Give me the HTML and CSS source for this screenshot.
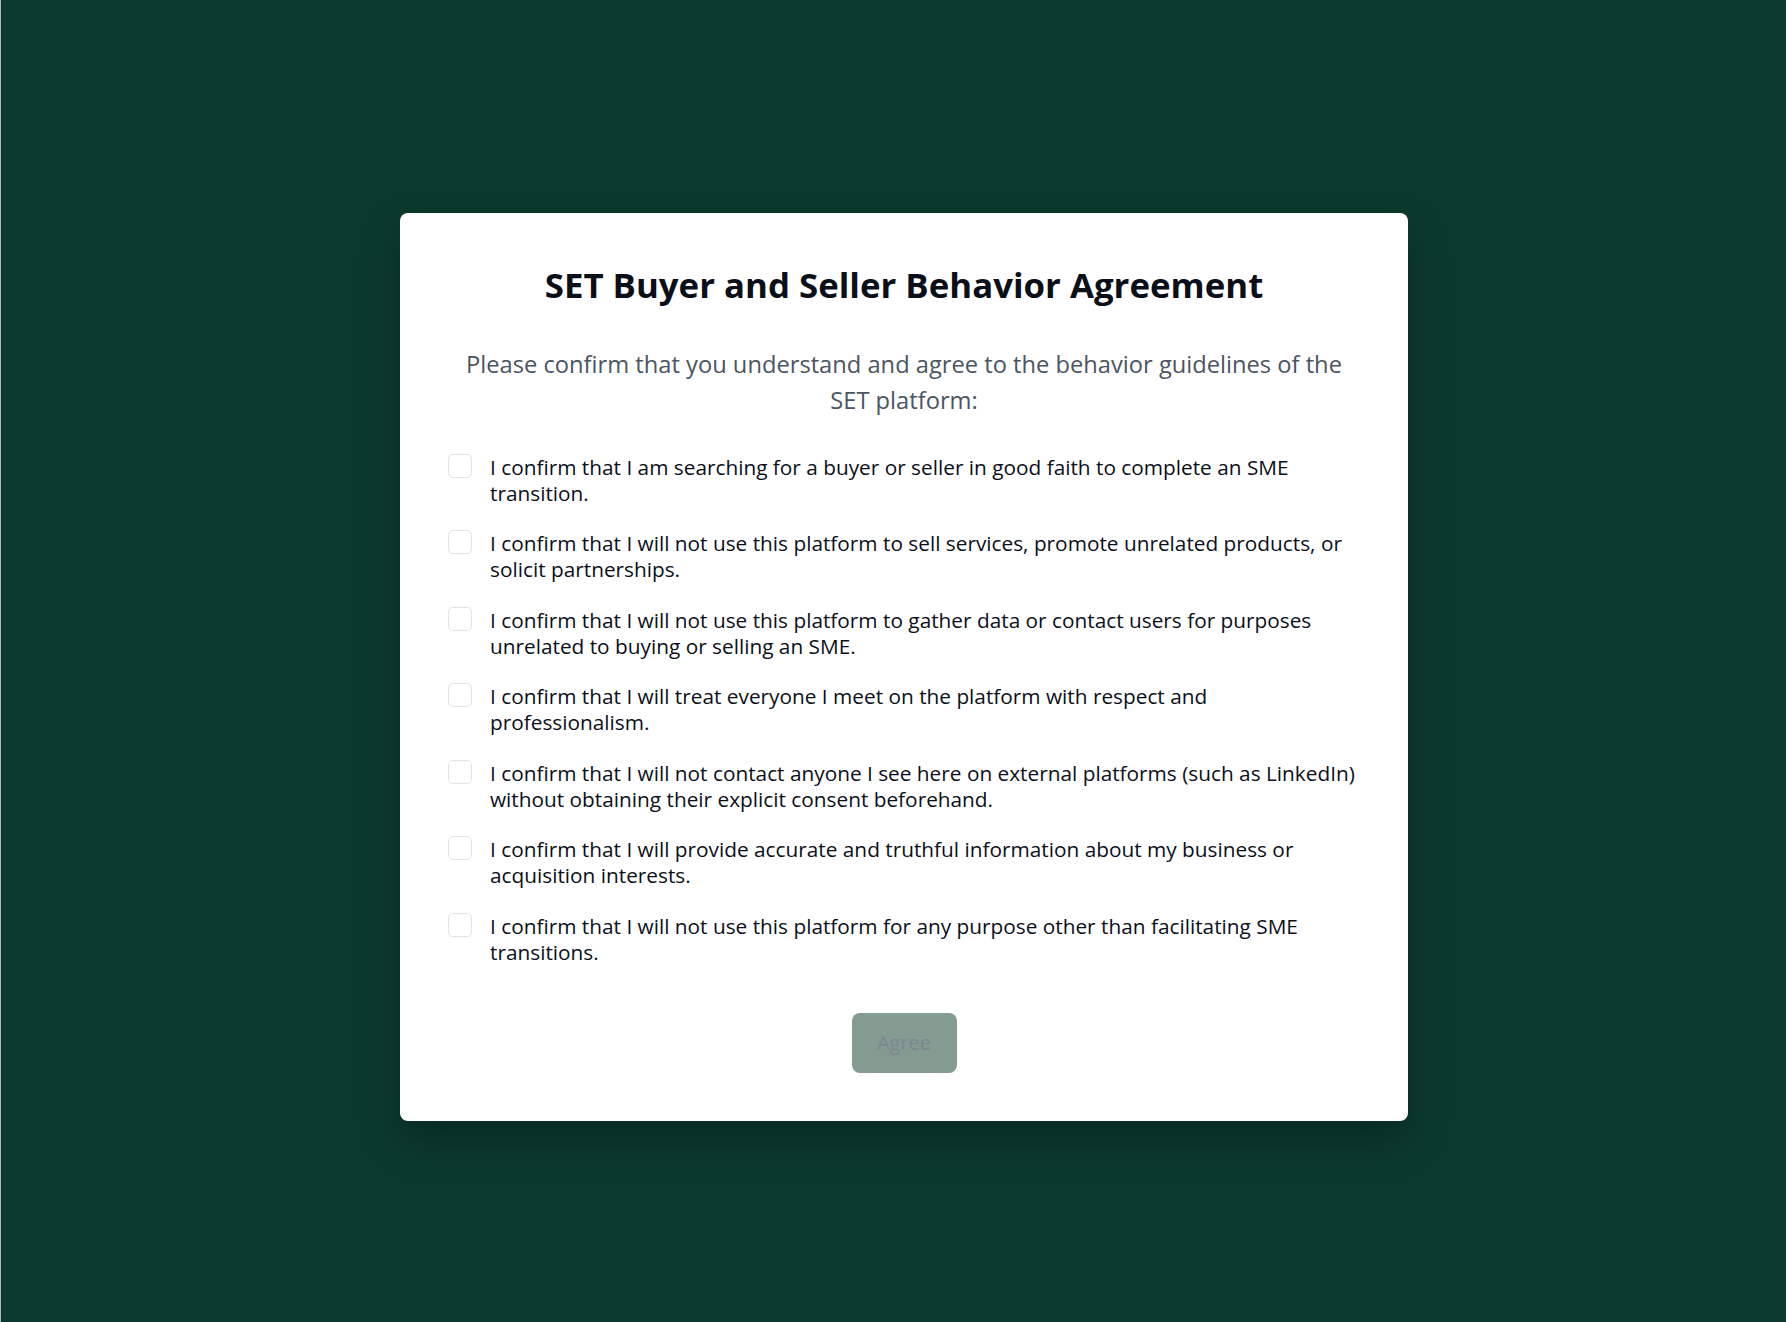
FILE: index.html
```html
<!DOCTYPE html>
<html lang="en">
<head>
<meta charset="utf-8">
<title>SET Buyer and Seller Behavior Agreement</title>
<link rel="stylesheet" href="styles.css">
</head>
<body>
<div class="overlay">
  <div class="modal">
    <h1 class="title">SET Buyer and Seller Behavior Agreement</h1>
    <p class="intro">Please confirm that you understand and agree to the behavior guidelines of the SET platform:</p>
    <ul class="items">
      <li class="item"><span class="box"></span><span class="text">I confirm that I am searching for a buyer or seller in good faith to complete an SME transition.</span></li>
      <li class="item"><span class="box"></span><span class="text">I confirm that I will not use this platform to sell services, promote unrelated products, or solicit partnerships.</span></li>
      <li class="item"><span class="box"></span><span class="text">I confirm that I will not use this platform to gather data or contact users for purposes unrelated to buying or selling an SME.</span></li>
      <li class="item"><span class="box"></span><span class="text">I confirm that I will treat everyone I meet on the platform with respect and professionalism.</span></li>
      <li class="item"><span class="box"></span><span class="text">I confirm that I will not contact anyone I see here on external platforms (such as LinkedIn) without obtaining their explicit consent beforehand.</span></li>
      <li class="item"><span class="box"></span><span class="text">I confirm that I will provide accurate and truthful information about my business or acquisition interests.</span></li>
      <li class="item"><span class="box"></span><span class="text">I confirm that I will not use this platform for any purpose other than facilitating SME transitions.</span></li>
    </ul>
    <div class="actions"><button class="agree" disabled>Agree</button></div>
  </div>
</div>
</body>
</html>
```
FILE: styles.css
```css
html, body { margin: 0; padding: 0; }
body {
  background: #0b3a2c;
  border-left: 1px solid #b4b4b4;
  font-family: "Open Sans", "Noto Sans", sans-serif;
  min-height: 100vh;
  box-sizing: border-box;
}
.overlay {
  min-height: 100vh;
  display: flex;
  align-items: center;
  justify-content: center;
  padding: 11px 0 0 21px;
  box-sizing: border-box;
}
.modal {
  width: 1008px;
  box-sizing: border-box;
  background: #fff;
  border-radius: 8px;
  padding: 48px;
  box-shadow: 0 20px 40px rgba(0,0,0,0.25);
}
.title {
  margin: 0;
  text-align: center;
  font-size: 34.8px;
  line-height: 48px;
  font-weight: 700;
  color: #0b0f1a;
}
.intro {
  margin: 37px 0 0;
  text-align: center;
  font-size: 23.7px;
  line-height: 36px;
  color: #4b5563;
}
.items {
  list-style: none;
  margin: 36px 0 0;
  padding: 0;
  display: flex;
  flex-direction: column;
  gap: 24.5px;
}
.item {
  display: flex;
  gap: 18px;
  align-items: flex-start;
}
.box {
  flex: none;
  width: 24px;
  height: 24px;
  box-sizing: border-box;
  border: 1px solid #dfe4ec;
  border-radius: 5px;
}
.text {
  font-size: 20.8px;
  line-height: 26px;
  color: #0b0f1a;
}
.actions {
  display: flex;
  justify-content: center;
  margin-top: 48px;
}
.agree {
  width: 105px;
  height: 60px;
  border: none;
  border-radius: 8px;
  background: #849b91;
  color: #7e8690;
  font-family: inherit;
  font-size: 20px;
  padding: 0;
}
```
